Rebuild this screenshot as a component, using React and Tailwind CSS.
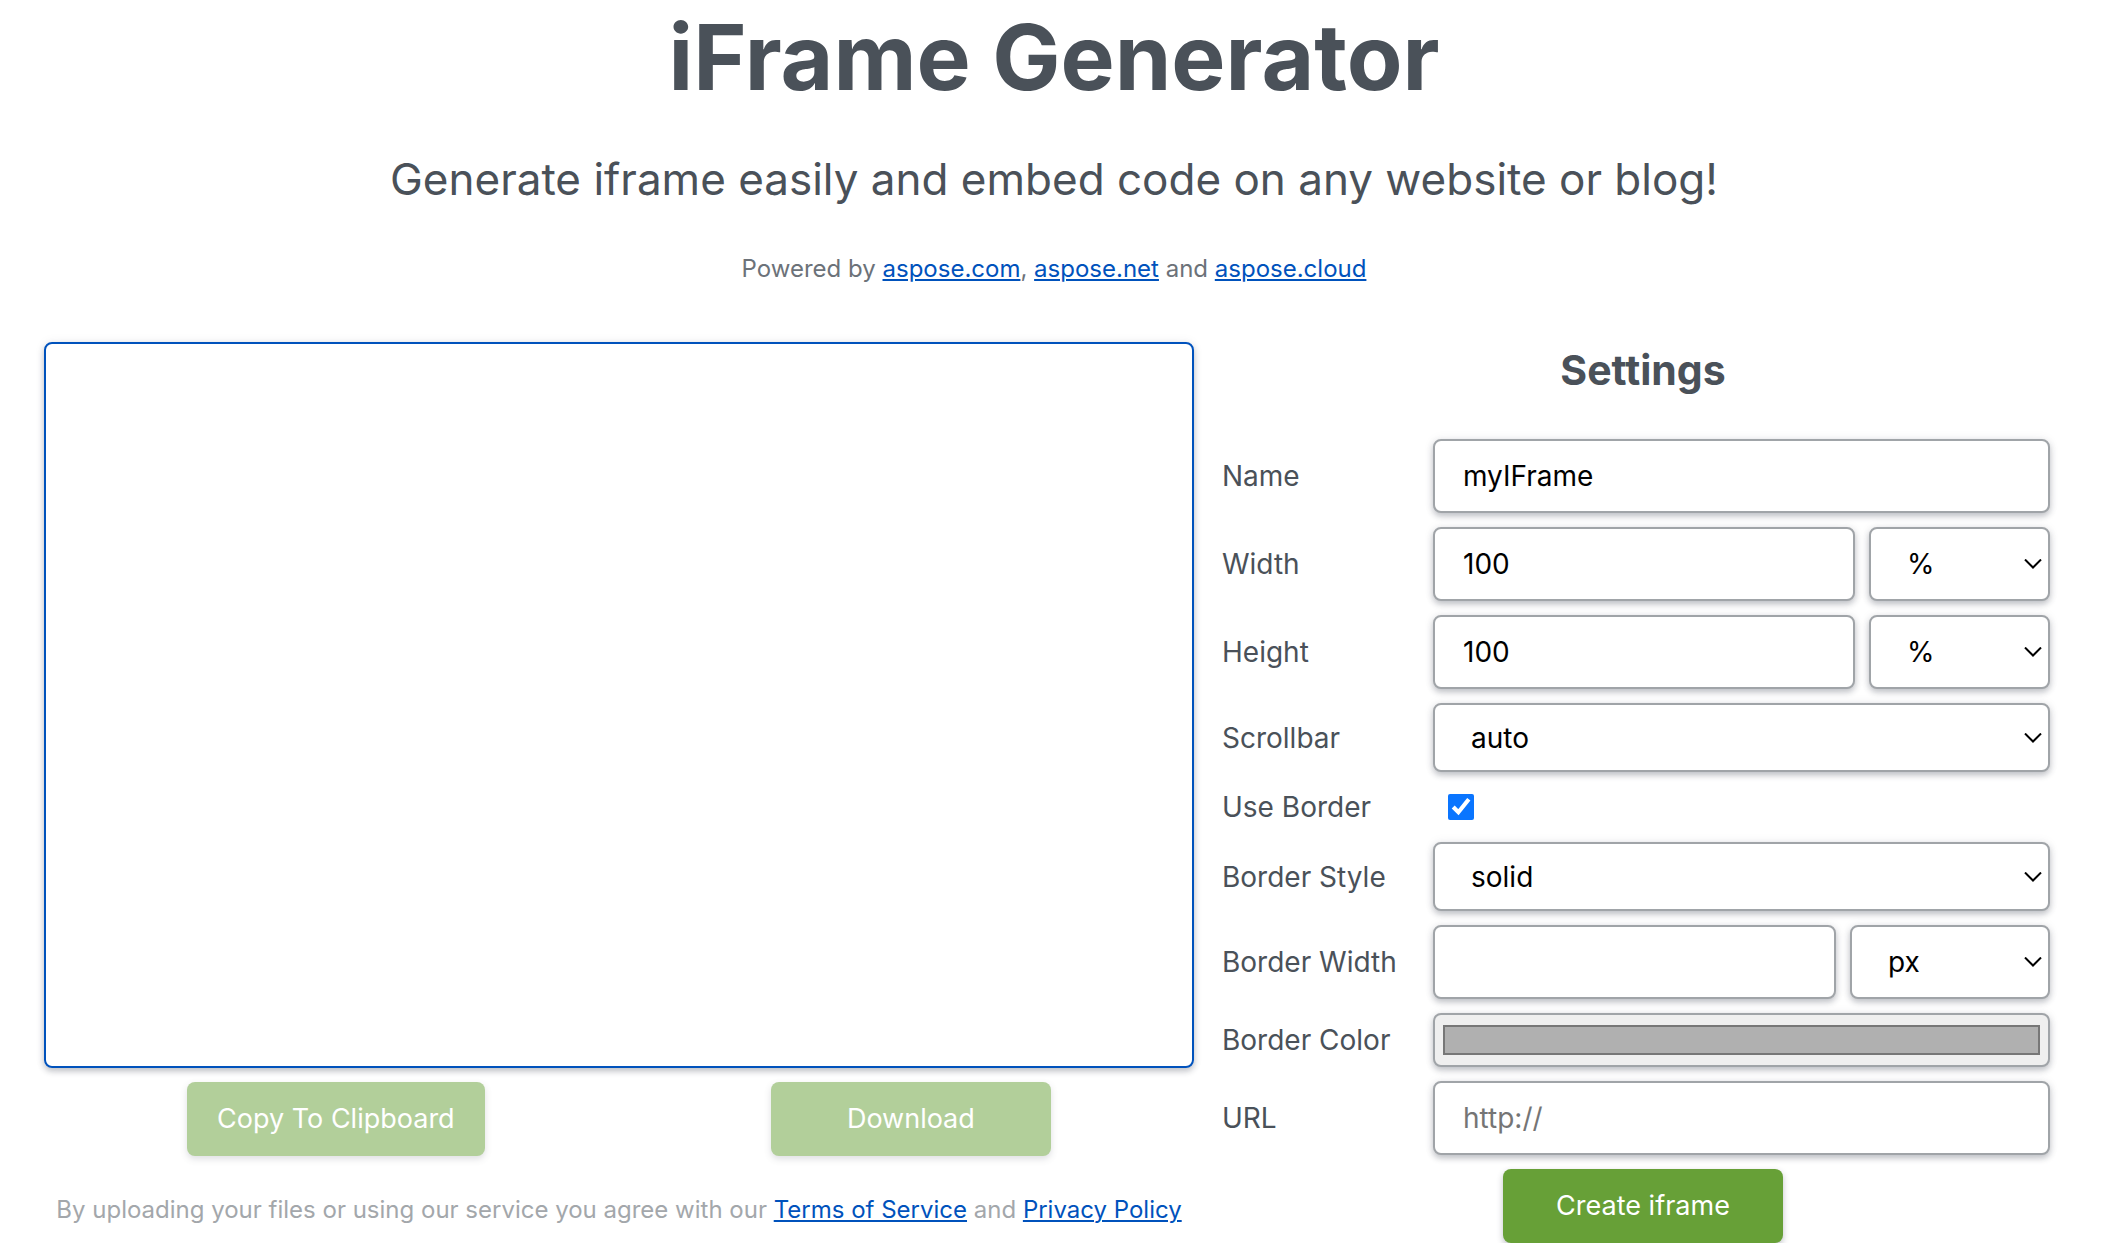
import React, { useState } from 'react';

const fieldClass =
  'rounded-lg border-2 border-[#a0a4a8] bg-white text-[28px] leading-[42px] text-black shadow-[0_3px_6px_rgba(60,64,80,0.32),0_0_12px_rgba(60,64,80,0.06)] outline-none';

const inputClass = `${fieldClass} h-[74px] w-full min-w-0 px-7 placeholder:text-[#757575]`;

const buttonClass =
  'h-[74px] min-w-[280px] rounded-lg bg-[#67a037] px-[30px] text-[27px] leading-[42px] text-white shadow-[0_3px_6px_rgba(60,64,80,0.32)] disabled:opacity-50';

const Link = ({ children }) => (
  <a href="#" className="text-[#0052bc] underline decoration-2 underline-offset-2">
    {children}
  </a>
);

const Select = ({ id, label, options, className, ...props }) => (
  <div className={`relative ${className}`}>
    <select
      id={id}
      aria-label={label}
      className={`${fieldClass} h-full w-full appearance-none pl-9 pr-10`}
      {...props}
    >
      {options.map((option) => (
        <option key={option}>{option}</option>
      ))}
    </select>
    <svg
      viewBox="0 0 18 10"
      className="pointer-events-none absolute right-2 top-1/2 h-2.5 w-[18px] -translate-y-1/2"
      fill="none"
      stroke="black"
      strokeWidth="2"
    >
      <path d="M1 0.5l8 8 8-8" />
    </svg>
  </div>
);

const Row = ({ id, label, children }) => (
  <div className="flex items-center">
    <label htmlFor={id} className="w-[211px] shrink-0 whitespace-nowrap">
      {label}
    </label>
    <div className="flex min-w-0 flex-1 items-center gap-3.5">{children}</div>
  </div>
);

const App = () => {
  const [useBorder, setUseBorder] = useState(true);
  const [code, setCode] = useState('');

  return (
    <div className="bg-white font-['Inter','Liberation_Sans',sans-serif] text-[28px] leading-[42px] text-[#4a5159]">
      <header className="text-center">
        <h1 className="text-[91px] font-bold leading-[114px]">iFrame Generator</h1>
        <h2 className="mt-9 text-[44px] leading-[58px]">
          Generate iframe easily and embed code on any website or blog!
        </h2>
        <p className="mt-[43px] text-[24px] leading-[36px] text-[#6c7279]">
          Powered by <Link>aspose.com</Link>, <Link>aspose.net</Link> and <Link>aspose.cloud</Link>
        </p>
      </header>

      <main className="mt-[55px] grid grid-cols-[1150fr_842fr] gap-7 px-11">
        <section>
          <textarea
            aria-label="Generated code"
            value={code}
            onChange={(e) => setCode(e.target.value)}
            className="block h-[726px] w-full resize-none rounded-lg border-2 border-[#0052bc] p-7 shadow-[0_3px_6px_rgba(60,64,80,0.32),0_0_12px_rgba(60,64,80,0.06)] outline-none"
          />
          <div className="mt-3.5 flex justify-around">
            <button type="button" disabled={!code} className={buttonClass}>
              Copy To Clipboard
            </button>
            <button type="button" disabled={!code} className={buttonClass}>
              Download
            </button>
          </div>
          <p className="mt-9 text-center text-[24px] leading-[36px] text-[#a3a7ab]">
            By uploading your files or using our service you agree with our{' '}
            <Link>Terms of Service</Link> and <Link>Privacy Policy</Link>
          </p>
        </section>

        <section>
          <h3 className="text-center text-[41px] font-bold leading-[56px]">Settings</h3>
          <form className="mt-[41px] flex flex-col gap-3.5 pr-3.5" onSubmit={(e) => e.preventDefault()}>
            <Row id="name" label="Name">
              <input id="name" type="text" defaultValue="myIFrame" className={inputClass} />
            </Row>
            <Row id="width" label="Width">
              <input id="width" type="text" defaultValue="100" className={inputClass} />
              <Select label="Width unit" options={['%', 'px']} className="h-[74px] w-[181px] shrink-0" />
            </Row>
            <Row id="height" label="Height">
              <input id="height" type="text" defaultValue="100" className={inputClass} />
              <Select label="Height unit" options={['%', 'px']} className="h-[74px] w-[181px] shrink-0" />
            </Row>
            <Row id="scrollbar" label="Scrollbar">
              <Select id="scrollbar" options={['auto', 'yes', 'no']} className="h-[69px] w-full" />
            </Row>
            <Row id="use-border" label="Use Border">
              <input
                id="use-border"
                type="checkbox"
                checked={useBorder}
                onChange={(e) => setUseBorder(e.target.checked)}
                className="ml-[15px] size-[26px] rounded accent-[#0a75ff]"
              />
            </Row>
            <Row id="border-style" label="Border Style">
              <Select id="border-style" options={['solid', 'dashed', 'dotted']} className="h-[69px] w-full" />
            </Row>
            <Row id="border-width" label="Border Width">
              <input id="border-width" type="text" className={inputClass} />
              <Select label="Border width unit" options={['px', 'em']} className="h-[74px] w-[200px] shrink-0" />
            </Row>
            <Row id="border-color" label="Border Color">
              <input
                id="border-color"
                type="color"
                defaultValue="#b0b0b0"
                className="h-[54px] w-full rounded-lg border-2 border-[#a0a4a8] bg-[#efefef] px-2 py-2.5 shadow-[0_3px_6px_rgba(60,64,80,0.32),0_0_12px_rgba(60,64,80,0.06)] [&::-webkit-color-swatch-wrapper]:p-0 [&::-webkit-color-swatch]:border-2 [&::-webkit-color-swatch]:border-[#777777]"
              />
            </Row>
            <Row id="url" label="URL">
              <input id="url" type="text" placeholder="http://" className={inputClass} />
            </Row>
            <button type="submit" className={`${buttonClass} -mr-3.5 self-center`}>
              Create iframe
            </button>
          </form>
        </section>
      </main>
    </div>
  );
};

export default App;
